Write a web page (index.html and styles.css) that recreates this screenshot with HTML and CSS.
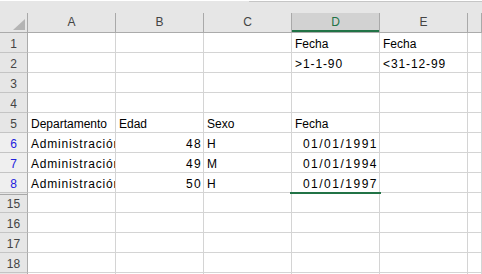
FILE: index.html
```html
<!DOCTYPE html>
<html lang="es">
<head>
    <meta charset="UTF-8">
    <title>Filtro avanzado</title>
    <link rel="stylesheet" href="styles.css">
</head>
<body>
    <div class="topbar"><div class="topline"></div></div>

    <div class="sheet">
        <div class="row head">
            <div class="corner"><span class="tri"></span></div>
            <div class="col">A</div>
            <div class="col">B</div>
            <div class="col">C</div>
            <div class="col selected">D</div>
            <div class="col">E</div>
            <div class="col"></div>
        </div>

        <div class="row">
            <div class="num">1</div>
            <div class="cell"></div><div class="cell"></div><div class="cell"></div>
            <div class="cell">Fecha</div>
            <div class="cell">Fecha</div>
            <div class="cell"></div>
        </div>
        <div class="row">
            <div class="num">2</div>
            <div class="cell"></div><div class="cell"></div><div class="cell"></div>
            <div class="cell crit">&gt;1-1-90</div>
            <div class="cell crit">&lt;31-12-99</div>
            <div class="cell"></div>
        </div>
        <div class="row">
            <div class="num">3</div>
            <div class="cell"></div><div class="cell"></div><div class="cell"></div>
            <div class="cell"></div><div class="cell"></div><div class="cell"></div>
        </div>
        <div class="row">
            <div class="num">4</div>
            <div class="cell"></div><div class="cell"></div><div class="cell"></div>
            <div class="cell"></div><div class="cell"></div><div class="cell"></div>
        </div>
        <div class="row">
            <div class="num">5</div>
            <div class="cell">Departamento</div>
            <div class="cell">Edad</div>
            <div class="cell">Sexo</div>
            <div class="cell">Fecha</div>
            <div class="cell"></div><div class="cell"></div>
        </div>

        <!-- filtered rows -->
        <div class="row">
            <div class="num filtered">6</div>
            <div class="cell dept">Administración</div>
            <div class="cell number">48</div>
            <div class="cell">H</div>
            <div class="cell date">01/01/1991</div>
            <div class="cell"></div><div class="cell"></div>
        </div>
        <div class="row">
            <div class="num filtered">7</div>
            <div class="cell dept">Administración</div>
            <div class="cell number">49</div>
            <div class="cell">M</div>
            <div class="cell date">01/01/1994</div>
            <div class="cell"></div><div class="cell"></div>
        </div>
        <div class="row">
            <div class="num filtered">8</div>
            <div class="cell dept">Administración</div>
            <div class="cell number">50</div>
            <div class="cell">H</div>
            <div class="cell date sel-bottom">01/01/1997</div>
            <div class="cell"></div><div class="cell"></div>
        </div>

        <div class="row">
            <div class="num hidden-above">15</div>
            <div class="cell"></div><div class="cell"></div><div class="cell"></div>
            <div class="cell"></div><div class="cell"></div><div class="cell"></div>
        </div>
        <div class="row">
            <div class="num">16</div>
            <div class="cell"></div><div class="cell"></div><div class="cell"></div>
            <div class="cell"></div><div class="cell"></div><div class="cell"></div>
        </div>
        <div class="row">
            <div class="num">17</div>
            <div class="cell"></div><div class="cell"></div><div class="cell"></div>
            <div class="cell"></div><div class="cell"></div><div class="cell"></div>
        </div>
        <div class="row">
            <div class="num">18</div>
            <div class="cell"></div><div class="cell"></div><div class="cell"></div>
            <div class="cell"></div><div class="cell"></div><div class="cell"></div>
        </div>
        <div class="row">
            <div class="num">19</div>
            <div class="cell"></div><div class="cell"></div><div class="cell"></div>
            <div class="cell"></div><div class="cell"></div><div class="cell"></div>
        </div>
    </div>
</body>
</html>
```

FILE: styles.css
```css
body {
    margin: 0;
    background-color: #fff;
    font-family: "Liberation Sans", Arial, sans-serif;
    font-size: 12px;
    color: #000;
    overflow: hidden;
}
.topbar {
    height: 12px;
    background-color: #e6e6e6;
    padding-left: 249px;
    box-sizing: border-box;
}
.topline {
    height: 1px;
    margin-top: 1px;
    background-color: #c6c6c6;
}
.row {
    display: grid;
    grid-template-columns: 28px repeat(5, 88px) 1fr;
    height: 20px;
}
.row > div {
    box-sizing: border-box;
    white-space: nowrap;
    overflow: hidden;
}

/* column headers */
.head > div {
    background-color: #e6e6e6;
    border-right: 1px solid #a9a9a9;
    border-bottom: 1px solid #ababab;
    color: #444;
    text-align: center;
    line-height: 19px;
}
.corner {
    display: flex;
    justify-content: flex-end;
    align-items: flex-end;
    padding: 0 2px 2px 0;
}
.tri {
    width: 0;
    height: 0;
    border-left: 12px solid transparent;
    border-bottom: 11px solid #b4b4b4;
}
.head .selected {
    background-color: #d2d2d2;
    color: #217346;
    box-shadow: inset 0 -2px 0 #217346;
}

/* row numbers */
.num {
    background-color: #e6e6e6;
    border-right: 1px solid #ababab;
    border-bottom: 1px solid #c4c4c4;
    color: #444;
    text-align: center;
    padding-top: 3px;
    line-height: 16px;
}
.num.filtered {
    background-color: #efefef;
    color: #2222dd;
}
.num.hidden-above {
    box-shadow: inset 0 1px 0 #e6e6e6, inset 0 2px 0 #a8a8a8;
}

/* cells */
.cell {
    border-right: 1px solid #d4d4d4;
    border-bottom: 1px solid #d4d4d4;
    padding: 3px 2px 0 3px;
    line-height: 16px;
}
.cell.crit {
    letter-spacing: 0.9px;
}
.cell.dept {
    letter-spacing: 0.8px;
}
.cell.number {
    text-align: right;
    letter-spacing: 1.3px;
    padding-right: 1px;
}
.cell.date {
    text-align: right;
    letter-spacing: 1.5px;
    padding-right: 1px;
}
.cell.sel-bottom {
    position: relative;
    overflow: visible;
}
.cell.sel-bottom::after {
    content: "";
    position: absolute;
    left: -2px;
    right: -2px;
    bottom: -2px;
    height: 2px;
    background-color: #217346;
}
```
